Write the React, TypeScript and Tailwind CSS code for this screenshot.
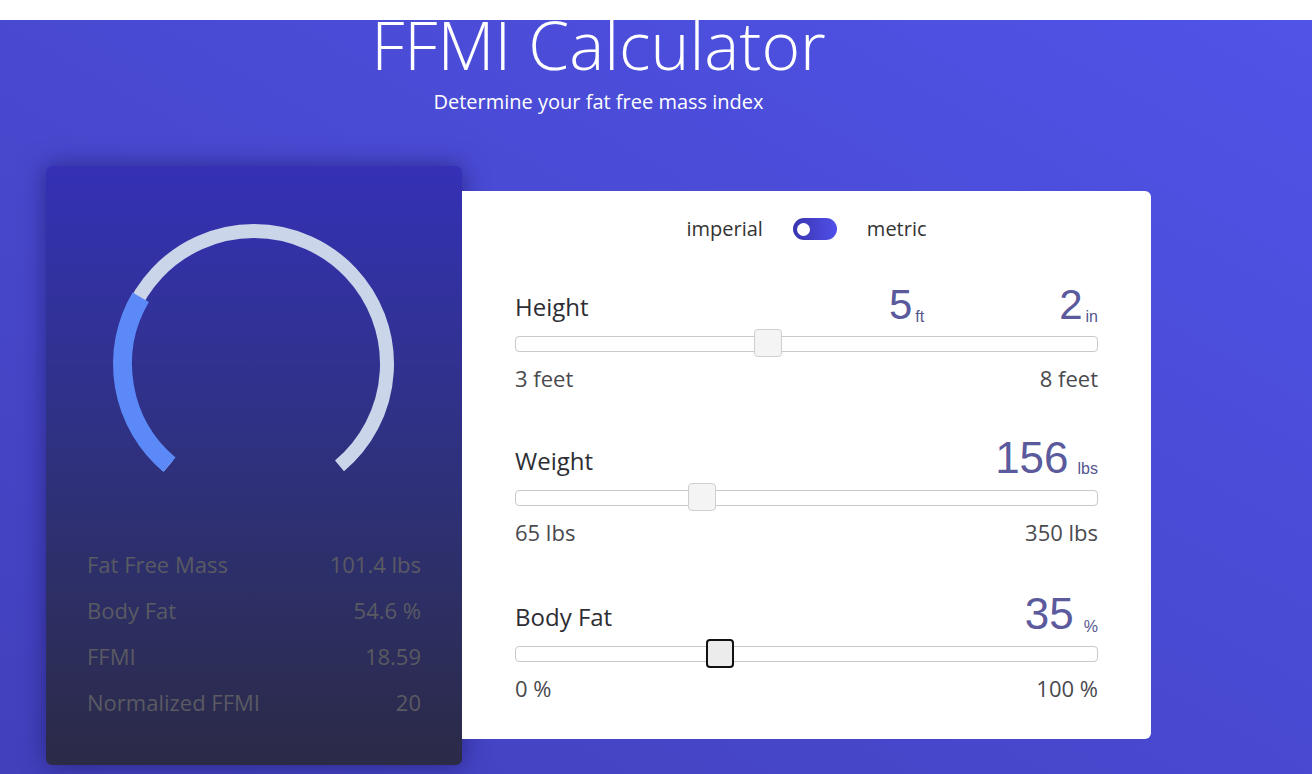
import React from "react";

const font = { fontFamily: "'Open Sans', 'Noto Sans', sans-serif" };

function pt(cx: number, cy: number, r: number, phi: number) {
  const a = (phi * Math.PI) / 180;
  return [cx - r * Math.sin(a), cy + r * Math.cos(a)];
}
function arc(cx: number, cy: number, r: number, a0: number, a1: number) {
  const [x0, y0] = pt(cx, cy, r, a0);
  const [x1, y1] = pt(cx, cy, r, a1);
  const large = a1 - a0 > 180 ? 1 : 0;
  return `M ${x0.toFixed(2)} ${y0.toFixed(2)} A ${r} ${r} 0 ${large} 1 ${x1.toFixed(2)} ${y1.toFixed(2)}`;
}

function Gauge() {
  return (
    <svg width="300" height="300" viewBox="0 0 300 300">
      <path d={arc(150, 150, 133, 40, 320)} fill="none" stroke="#cad5e9" strokeWidth="14" />
      <path d={arc(150, 150, 131.5, 40, 120.5)} fill="none" stroke="#5b8af8" strokeWidth="19" />
    </svg>
  );
}

function Stat({ label, value }: { label: string; value: string }) {
  return (
    <div className="flex justify-between items-center h-[46px] text-[22px] text-[#5a5a62]">
      <span>{label}</span>
      <span>{value}</span>
    </div>
  );
}

function Slider({ pos, focused }: { pos: number; focused?: boolean }) {
  return (
    <div className="relative h-[16px] rounded-[4px] border border-[#c9c9c9] bg-white">
      <div
        className={
          focused
            ? "absolute top-[-8px] w-[28px] h-[29px] rounded-[4px] border-2 border-[#111] bg-[#ececec]"
            : "absolute top-[-8px] w-[28px] h-[28px] rounded-[4px] border border-[#cfcfcf] bg-[#f4f4f4]"
        }
        style={{ left: pos }}
      />
    </div>
  );
}

const numStyle = { fontFamily: "'Liberation Sans', Arial, sans-serif" };

function Section({
  label,
  values,
  pos,
  focused,
  min,
  max,
}: {
  label: string;
  values: React.ReactNode;
  pos: number;
  focused?: boolean;
  min: string;
  max: string;
}) {
  return (
    <div>
      <div className="flex justify-between items-end h-[44px] pb-[3px]">
        <span className="text-[24px] text-[#2d2d33] leading-none pb-[7px]">{label}</span>
        {values}
      </div>
      <div className="mt-[7px]">
        <Slider pos={pos} focused={focused} />
      </div>
      <div className="flex justify-between mt-[15px] text-[22px] text-[#4a4a4f] leading-none">
        <span>{min}</span>
        <span>{max}</span>
      </div>
    </div>
  );
}

export default function App() {
  return (
    <div style={font} className="w-[1312px] h-[774px] overflow-hidden bg-white">
      <div className="h-[20px] bg-white" />
      <div className="h-[754px] bg-linear-to-tr from-[#4240bb] to-[#4f53e7]">
        <div className="ml-[46px] w-[1105px]">
          <div className="flex flex-col items-center text-white">
            <h1 className="text-[66px] font-light leading-none mt-[-9px]">FFMI Calculator</h1>
            <p className="text-[20px] mt-[15px] leading-none">Determine your fat free mass index</p>
          </div>
          <div className="flex items-start mt-[54px]">
            <div className="w-[416px] h-[599px] rounded-[6px] bg-linear-to-b from-[#3530b6] to-[#2b2a47] shadow-[0_0_24px_rgba(20,15,80,0.55)] flex flex-col items-center">
              <div className="mt-[48px]">
                <Gauge />
              </div>
              <div className="w-full px-[41px] mt-[27px]">
                <Stat label="Fat Free Mass" value="101.4 lbs" />
                <Stat label="Body Fat" value="54.6 %" />
                <Stat label="FFMI" value="18.59" />
                <Stat label="Normalized FFMI" value="20" />
              </div>
            </div>
            <div className="w-[689px] h-[548px] mt-[25px] bg-white rounded-r-[6px] px-[53px]">
              <div className="flex justify-center items-center gap-[30px] pt-[23px] text-[20px] text-[#333]">
                <span>imperial</span>
                <div className="w-[44px] h-[22px] rounded-full bg-linear-to-r from-[#3a35b0] to-[#5050ea] flex items-center pl-[4px]">
                  <div className="w-[13px] h-[13px] rounded-full bg-white" />
                </div>
                <span>metric</span>
              </div>
              <div className="mt-[41px]">
                <Section
                  label="Height"
                  pos={238}
                  min="3 feet"
                  max="8 feet"
                  values={
                    <div style={numStyle} className="flex items-end text-[#5a5a9c]">
                      <span className="text-[42px] leading-none">5</span>
                      <span className="text-[16px] leading-none ml-[3px] mb-[1px] text-[#55558f]">ft</span>
                      <span className="text-[42px] leading-none ml-[135px]">2</span>
                      <span className="text-[16px] leading-none ml-[3px] mb-[1px] text-[#55558f]">in</span>
                    </div>
                  }
                />
              </div>
              <div className="mt-[50px]">
                <Section
                  label="Weight"
                  pos={172}
                  min="65 lbs"
                  max="350 lbs"
                  values={
                    <div style={numStyle} className="flex items-end text-[#5a5a9c]">
                      <span className="text-[44px] leading-none">156</span>
                      <span className="text-[16px] leading-none ml-[9px] mb-[3px] text-[#55558f]">lbs</span>
                    </div>
                  }
                />
              </div>
              <div className="mt-[52px]">
                <Section
                  label="Body Fat"
                  pos={190}
                  focused
                  min="0 %"
                  max="100 %"
                  values={
                    <div style={numStyle} className="flex items-end text-[#5a5a9c]">
                      <span className="text-[44px] leading-none">35</span>
                      <span className="text-[16px] leading-none ml-[10px] mb-[1px] text-[#55558f]">%</span>
                    </div>
                  }
                />
              </div>
            </div>
          </div>
        </div>
      </div>
    </div>
  );
}
